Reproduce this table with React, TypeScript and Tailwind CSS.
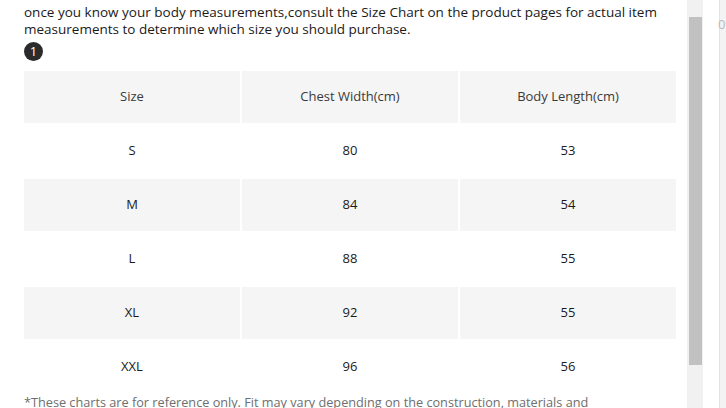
const rows = [
  { size: "S", chest: "80", length: "53" },
  { size: "M", chest: "84", length: "54" },
  { size: "L", chest: "88", length: "55" },
  { size: "XL", chest: "92", length: "55" },
  { size: "XXL", chest: "96", length: "56" },
]

export default function App() {
  return (
    <div className="flex h-[408px] w-[726px] overflow-hidden bg-white font-['Open_Sans',sans-serif]">
      {/* Modal body */}
      <div className="w-[687px] shrink-0 pl-[24px] pr-[9px] pt-[4px]">
        <p className="text-[13.5px] leading-[17px] text-[#1a1a1a]">
          once you know your body measurements,consult the Size Chart on the product pages for actual item
          measurements to determine which size you should purchase.
        </p>
        <div className="mt-[4px] flex h-[19px] w-[19px] items-center justify-center rounded-full bg-[#2b2b2b] text-[13px] leading-none text-white">
          1
        </div>

        <table className="-ml-[2px] mt-[8px] w-[656px] table-fixed border-separate border-spacing-[2px] text-center text-[13px]">
          <thead>
            <tr>
              <th className="h-[52px] bg-[#f5f5f5] font-normal text-[#3a3a3a]">Size</th>
              <th className="h-[52px] bg-[#f5f5f5] font-normal text-[#3a3a3a]">Chest Width(cm)</th>
              <th className="h-[52px] bg-[#f5f5f5] font-normal text-[#3a3a3a]">Body Length(cm)</th>
            </tr>
          </thead>
          <tbody>
            {rows.map((r, i) => (
              <tr key={r.size} className={i % 2 === 1 ? "bg-[#f5f5f5]" : "bg-white"}>
                <td className="h-[52px] text-[#1a1a1a]">{r.size}</td>
                <td className="h-[52px] text-[#1a1a1a]">{r.chest}</td>
                <td className="h-[52px] text-[#1a1a1a]">{r.length}</td>
              </tr>
            ))}
          </tbody>
        </table>

        <p className="-mt-[1px] max-w-[610px] text-[12.7px] leading-[17px] text-[#6e6e6e]">
          *These charts are for reference only. Fit may vary depending on the construction, materials and
          manufacturer.
        </p>
      </div>

      {/* Scrollbar */}
      <div className="relative h-full w-[16px] shrink-0 bg-[#f1f1f1]">
        <div className="absolute left-[2px] top-[17px] h-[348px] w-[13px] bg-[#c1c1c1]" />
      </div>

      <div className="w-[16px] shrink-0 bg-white" />

      {/* Page behind */}
      <div className="relative flex-1 border-l border-[#e2e2e2] bg-[#f3f3f3]">
        <span className="absolute -left-[2px] top-[18px] text-[13px] leading-none text-[#bbb]">0</span>
      </div>
    </div>
  )
}
